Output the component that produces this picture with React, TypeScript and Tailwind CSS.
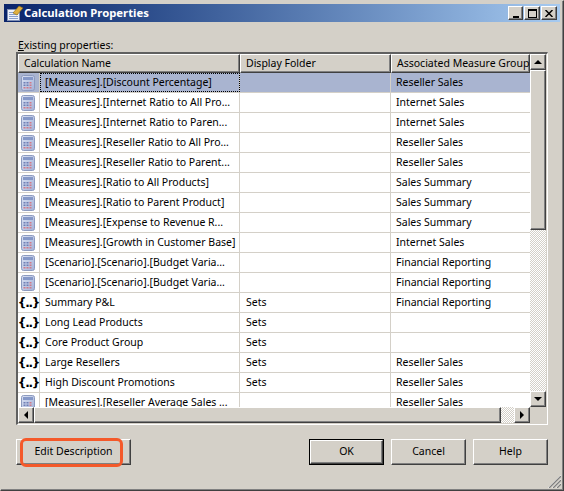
import type { ReactNode } from "react";

const rows: { kind: "calc" | "set"; name: string; folder: string; group: string }[] = [
  { kind: "calc", name: "[Measures].[Discount Percentage]", folder: "", group: "Reseller Sales" },
  { kind: "calc", name: "[Measures].[Internet Ratio to All Pro...", folder: "", group: "Internet Sales" },
  { kind: "calc", name: "[Measures].[Internet Ratio to Paren...", folder: "", group: "Internet Sales" },
  { kind: "calc", name: "[Measures].[Reseller Ratio to All Pro...", folder: "", group: "Reseller Sales" },
  { kind: "calc", name: "[Measures].[Reseller Ratio to Parent...", folder: "", group: "Reseller Sales" },
  { kind: "calc", name: "[Measures].[Ratio to All Products]", folder: "", group: "Sales Summary" },
  { kind: "calc", name: "[Measures].[Ratio to Parent Product]", folder: "", group: "Sales Summary" },
  { kind: "calc", name: "[Measures].[Expense to Revenue R...", folder: "", group: "Sales Summary" },
  { kind: "calc", name: "[Measures].[Growth in Customer Base]", folder: "", group: "Internet Sales" },
  { kind: "calc", name: "[Scenario].[Scenario].[Budget Varia...", folder: "", group: "Financial Reporting" },
  { kind: "calc", name: "[Scenario].[Scenario].[Budget Varia...", folder: "", group: "Financial Reporting" },
  { kind: "set", name: "Summary P&L", folder: "Sets", group: "Financial Reporting" },
  { kind: "set", name: "Long Lead Products", folder: "Sets", group: "" },
  { kind: "set", name: "Core Product Group", folder: "Sets", group: "" },
  { kind: "set", name: "Large Resellers", folder: "Sets", group: "Reseller Sales" },
  { kind: "set", name: "High Discount Promotions", folder: "Sets", group: "Reseller Sales" },
  { kind: "calc", name: "[Measures].[Reseller Average Sales ...", folder: "", group: "Reseller Sales" },
];

const raised =
  "border border-t-white border-l-white border-r-[#404040] border-b-[#404040] bg-[#d4d0c8] shadow-[inset_-1px_-1px_0_#808080]";
const hatch =
  "bg-[repeating-conic-gradient(#d4d0c8_0_25%,#ffffff_0_50%)] bg-[length:2px_2px]";

function CalcIcon({ id }: { id: number }) {
  return (
    <svg width="14" height="16" viewBox="0 0 14 16">
      <defs>
        <linearGradient id={`calcBody${id}`} x1="0" y1="0" x2="1" y2="1">
          <stop offset="0" stopColor="#dbe2f3" />
          <stop offset="1" stopColor="#a3b1d8" />
        </linearGradient>
      </defs>
      <rect x="0.5" y="0.5" width="13" height="15" rx="2" fill={`url(#calcBody${id})`} stroke="#8c9abf" />
      <rect x="2" y="2" width="10" height="3" fill="#8598c8" />
      {[7, 9.5, 12].map((y) =>
        [2.5, 5.5, 8.5].map((x) => (
          <rect key={`${x}-${y}`} x={x} y={y} width="2" height="1.5" fill={y === 12 || x === 8.5 ? "#d07a88" : "#6f7fb4"} />
        )),
      )}
    </svg>
  );
}

function SetIcon() {
  return <span className="font-['DejaVu_Sans',sans-serif] text-[12px] leading-none font-bold tracking-[-1.2px] text-black">{"{..}"}</span>;
}

function TitleIcon() {
  return (
    <svg width="18" height="16" viewBox="0 0 18 16">
      <rect x="1.5" y="4.5" width="12" height="11" fill="#eef2fa" stroke="#7f8fb5" />
      <path d="M3 7.5h9M3 9.5h9M3 11.5h9M3 13.5h9" stroke="#8aa0cc" />
      <path d="M7 8l6-7 4 2-6 7z" fill="#e0b040" stroke="#8a6a10" strokeWidth="0.6" />
    </svg>
  );
}

function CaptionButton({ children, className }: { children: ReactNode; className: string }) {
  return <div className={`${raised} flex h-[14px] items-center justify-center ${className}`}>{children}</div>;
}

function Arrow({ dir }: { dir: "up" | "down" | "left" | "right" }) {
  const d = {
    up: "M4 1l4 4H0z",
    down: "M0 1h8L4 5z",
    left: "M5 0v8L1 4z",
    right: "M1 0v8l4-4z",
  }[dir];
  const box = dir === "up" || dir === "down" ? "0 0 8 6" : "0 0 6 8";
  const size = dir === "up" || dir === "down" ? { w: 8, h: 6 } : { w: 6, h: 8 };
  return (
    <svg width={size.w} height={size.h} viewBox={box}>
      <path d={d} fill="#000" />
    </svg>
  );
}

function ScrollButton({ dir }: { dir: "up" | "down" | "left" | "right" }) {
  return (
    <div className={`${raised} flex h-4 w-4 shrink-0 items-center justify-center`}>
      <Arrow dir={dir} />
    </div>
  );
}

function HeaderCell({ label, className }: { label: string; className: string }) {
  return (
    <div className={`${raised} flex h-[19px] shrink-0 items-center pl-[5px] whitespace-nowrap ${className}`}>{label}</div>
  );
}

function DialogButton({ label, className }: { label: string; className: string }) {
  return (
    <button type="button" className={`${raised} h-[26px] shrink-0 text-black ${className}`}>
      {label}
    </button>
  );
}

export default function App() {
  return (
    <div className="relative flex h-[491px] w-[564px] flex-col overflow-hidden border border-t-[#d4d0c8] border-r-[#404040] border-b-[#404040] border-l-[#d4d0c8] bg-[#d4d0c8] p-[3px] font-['Noto_Sans',sans-serif] text-[10.5px] text-black shadow-[inset_-1px_-1px_0_#808080]">
      <div className="flex h-[18px] shrink-0 items-center bg-gradient-to-r from-[#0a246a] to-[#a6caf0] pr-[3px] pl-[2px]">
        <TitleIcon />
        <span className="flex-1 text-[11.3px] font-bold text-white">Calculation Properties</span>
        <CaptionButton className="mr-px w-[15px]">
          <div className="mt-[7px] h-[2px] w-[6px] bg-black" />
        </CaptionButton>
        <CaptionButton className="mr-[1px] w-4">
          <div className="h-[9px] w-[9px] border border-t-2 border-black" />
        </CaptionButton>
        <CaptionButton className="w-4">
          <svg width="8" height="7" viewBox="0 0 8 7">
            <path d="M0.5 0l7 7M7.5 0l-7 7" stroke="#000" strokeWidth="1.5" />
          </svg>
        </CaptionButton>
      </div>

      <div className="flex flex-1 flex-col px-3 pt-[16px]">
        <div className="h-[14px] pl-[2px] leading-[14px]">
          <span className="underline">E</span>xisting properties:
        </div>

        <div className="flex h-[373px] flex-col border border-t-2 border-l-2 border-t-[#606060] border-r-white border-b-white border-l-[#606060] pr-px pb-px">
          <div className="flex min-h-0 flex-1">
            <div className="flex min-w-0 flex-1 flex-col">
              <div className="flex shrink-0">
                <HeaderCell label="Calculation Name" className="w-[222px]" />
                <HeaderCell label="Display Folder" className="w-[151px]" />
                <HeaderCell label="Associated Measure Group" className="flex-1" />
              </div>
              <div className="min-h-0 flex-1 overflow-hidden bg-white">
                {rows.map((row, i) => (
                  <div key={i} className="flex h-5 border-b border-[#d4d0c8]">
                    <div className={`flex w-[22px] shrink-0 items-center justify-center border-r border-[#d4d0c8] ${row.kind === "calc" ? "pr-px" : ""} ${i === 0 ? "bg-[#a9b4d0]" : "bg-white"}`}>
                      {row.kind === "calc" ? <CalcIcon id={i} /> : <SetIcon />}
                    </div>
                    <div
                      className={`flex w-[200px] shrink-0 items-center overflow-hidden border-r border-[#d4d0c8] pl-[5px] whitespace-nowrap ${i === 0 ? "bg-[#a9b4d0] outline-1 -outline-offset-1 outline-black outline-dotted" : ""}`}
                    >
                      {row.name}
                    </div>
                    <div className={`flex w-[151px] shrink-0 items-center border-r border-[#d4d0c8] pl-[6px] ${i === 0 ? "bg-[#a9b4d0]" : ""}`}>
                      {row.folder}
                    </div>
                    <div className={`flex flex-1 items-center pl-[5px] ${i === 0 ? "bg-[#a9b4d0]" : ""}`}>{row.group}</div>
                  </div>
                ))}
              </div>
            </div>
            <div className="flex w-4 shrink-0 flex-col">
              <ScrollButton dir="up" />
              <div className={`${raised} h-[160px] shrink-0`} />
              <div className={`${hatch} flex-1`} />
              <ScrollButton dir="down" />
            </div>
          </div>
          <div className="flex h-4 shrink-0">
            <ScrollButton dir="left" />
            <div className={`${raised} w-[467px] shrink-0`} />
            <div className={`${hatch} flex-1`} />
            <ScrollButton dir="right" />
            <div className="w-4 shrink-0 bg-[#d4d0c8]" />
          </div>
        </div>

        <div className="mt-[14px] flex">
          <DialogButton label="Edit Description" className="w-[115px]" />
          <div className="flex-1" />
          <button type="button" className="h-[26px] w-[75px] shrink-0 border border-black">
            <div className={`${raised} flex h-full w-full items-center justify-center`}>OK</div>
          </button>
          <DialogButton label="Cancel" className="ml-[7px] w-[75px]" />
          <DialogButton label="Help" className="ml-[7px] w-[75px]" />
        </div>
      </div>

      <svg className="absolute right-[2px] bottom-[2px]" width="14" height="14" viewBox="0 0 14 14">
        <path d="M14 1L1 14M14 5L5 14M14 9L9 14" stroke="#ffffff" strokeWidth="1" />
        <path d="M14 2L2 14M14 6L6 14M14 10L10 14" stroke="#808080" strokeWidth="1.4" />
      </svg>
      <div className="pointer-events-none absolute top-[437px] left-[19px] h-[29px] w-[103px] rounded-[6px] border-[3px] border-[#f4592a]" />
    </div>
  );
}
